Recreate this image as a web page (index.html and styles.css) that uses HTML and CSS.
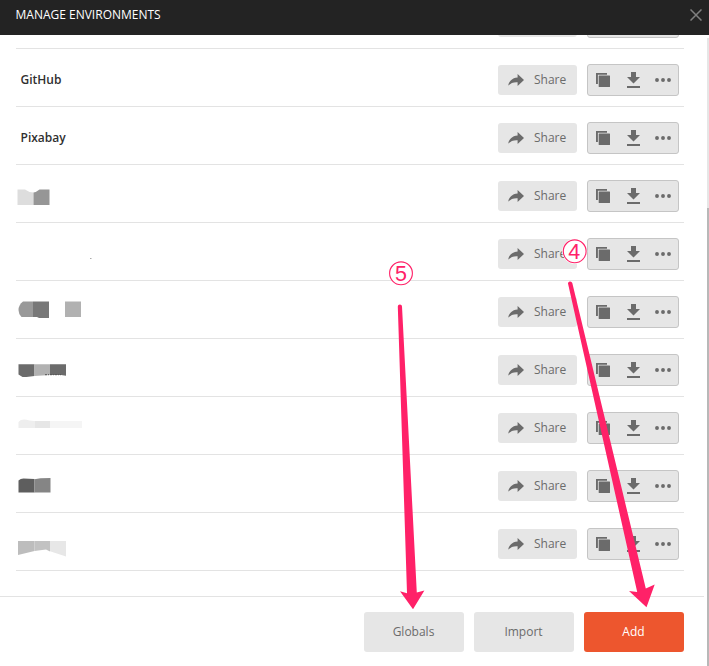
FILE: index.html
```html
<!DOCTYPE html>
<html lang="en">
<head>
<meta charset="utf-8">
<title>Manage Environments</title>
<link rel="stylesheet" href="styles.css">
</head>
<body>
<svg class="defs" aria-hidden="true">
  <symbol id="share" viewBox="0 0 16 12"><path d="M9.600 0 16 6l-6.400 6V8.200C5.600 7.900 3 9 .2 11.600 .8 7.600 4 3.700 9.600 3.400Z"/></symbol>
  <symbol id="copy" viewBox="0 0 14 14"><path d="M0 0h11v1.700H1.900V11H0Z"/><rect x="2.700" y="2.400" width="11.300" height="11.600" rx=".5"/></symbol>
  <symbol id="down" viewBox="0 0 13 16"><path d="M4 0h5v5h4L6.500 11.500 0 5h4ZM0 14h13v2H0Z"/></symbol>
  <symbol id="more" viewBox="0 0 16 4"><circle cx="2" cy="2" r="1.950"/><circle cx="8" cy="2" r="1.950"/><circle cx="14" cy="2" r="1.950"/></symbol>
</svg>
<div class="modal">
  <header class="header"><span>MANAGE ENVIRONMENTS</span>
    <svg class="close" viewBox="0 0 12 12"><path d="M.5.5l11 11M11.500.5l-11 11"/></svg>
  </header>
  <main class="body">
    <div class="list">
      <div class="row"><span class="name"></span><button class="share"></button><div class="tools"></div></div>
      <div class="row"><span class="name">GitHub</span><button class="share"><svg><use href="#share"/></svg>Share</button><div class="tools"><svg class="copy"><use href="#copy"/></svg><svg class="down"><use href="#down"/></svg><svg class="more"><use href="#more"/></svg></div></div>
      <div class="row"><span class="name">Pixabay</span><button class="share"><svg><use href="#share"/></svg>Share</button><div class="tools"><svg class="copy"><use href="#copy"/></svg><svg class="down"><use href="#down"/></svg><svg class="more"><use href="#more"/></svg></div></div>
      <div class="row"><svg class="mask" viewBox="16 165 100 57"><path fill="#ddd" d="M17.500 189.500H25q4 3 8.500 3V205h-16Z"/><path fill="#969696" d="M33.500 192.500q3-.5 6-3h10V205h-16Z"/></svg><button class="share"><svg><use href="#share"/></svg>Share</button><div class="tools"><svg class="copy"><use href="#copy"/></svg><svg class="down"><use href="#down"/></svg><svg class="more"><use href="#more"/></svg></div></div>
      <div class="row"><svg class="mask" viewBox="16 223 100 57"><path fill="#aaa" d="M90 258h1.500v1H90Z"/></svg><button class="share"><svg><use href="#share"/></svg>Share</button><div class="tools"><svg class="copy"><use href="#copy"/></svg><svg class="down"><use href="#down"/></svg><svg class="more"><use href="#more"/></svg></div></div>
      <div class="row"><svg class="mask" viewBox="16 281 100 57"><path fill="#999" d="M23 301.500h10V317H21.500q-3-3-3-7 0-5 4.500-8.500Z"/><path fill="#787878" d="M33 301.500h16V318H39l-2-1h-4Z"/><path fill="#b1b1b1" d="M65 301.500h16V317H65Z"/></svg><button class="share"><svg><use href="#share"/></svg>Share</button><div class="tools"><svg class="copy"><use href="#copy"/></svg><svg class="down"><use href="#down"/></svg><svg class="more"><use href="#more"/></svg></div></div>
      <div class="row"><svg class="mask" viewBox="16 339 100 57"><path fill="#6b6b6b" d="M18.500 364.300h16v11.700l-8 1-4 0-4-2.500Z"/><path fill="#b1b1b1" d="M34.500 364.300H50v10.700l-15.500 1Z"/><path fill="#6b6b6b" d="M50 364.300h16v11.500l-5-.8H50Z"/><path stroke="#555" stroke-dasharray="2 1 1 1" d="M45 374.700h16"/></svg><button class="share"><svg><use href="#share"/></svg>Share</button><div class="tools"><svg class="copy"><use href="#copy"/></svg><svg class="down"><use href="#down"/></svg><svg class="more"><use href="#more"/></svg></div></div>
      <div class="row"><svg class="mask" viewBox="16 397 100 57"><path fill="#eee" d="M18.500 422q3-4 11-1.500l5 .5v7h-16Z"/><path fill="#e6e6e6" d="M34.500 421H50v7H34.500Z"/><path fill="#f5f5f5" d="M50 421h32v7H50Z"/></svg><button class="share"><svg><use href="#share"/></svg>Share</button><div class="tools"><svg class="copy"><use href="#copy"/></svg><svg class="down"><use href="#down"/></svg><svg class="more"><use href="#more"/></svg></div></div>
      <div class="row"><svg class="mask" viewBox="16 455 100 57"><path fill="#5e5e5e" d="M18.500 480.500q2-2 5-2l11 .5v13.500h-16Z"/><path fill="#858585" d="M34.500 479.300l6-1.100 10-.2v14.500h-16Z"/></svg><button class="share"><svg><use href="#share"/></svg>Share</button><div class="tools"><svg class="copy"><use href="#copy"/></svg><svg class="down"><use href="#down"/></svg><svg class="more"><use href="#more"/></svg></div></div>
      <div class="row"><svg class="mask" viewBox="16 513 100 57"><path fill="#bdbdbd" d="M18 541h16.500v10L18 555Z"/><path fill="#c2c2c2" d="M34.500 541H50v10.500l-4-2-11.500 1.500Z"/><path fill="#e7e7e7" d="M50 541h16v15.500L50 551.200Z"/></svg><button class="share"><svg><use href="#share"/></svg>Share</button><div class="tools"><svg class="copy"><use href="#copy"/></svg><svg class="down"><use href="#down"/></svg><svg class="more"><use href="#more"/></svg></div></div>
    </div>
    <footer class="footer"><button class="btn">Globals</button><button class="btn">Import</button><button class="btn primary">Add</button></footer>
  </main>
  <div class="scrollbar"><div class="thumb"></div></div>
  <svg class="annotations" viewBox="0 0 709 666">
    <path d="M397.800 306.500q0-2 2.100-2t2.100 2L416.800 592.500l7.600-2L413 609.300 400 591.200l7 2Z"/>
    <path d="M568 283.500q-.2-1.500 1.700-2 2-.3 2.600 1.500L645.800 588.500l8.900-4L646.500 607.300 629 591l8.200 1Z"/>
    <circle class="halo" cx="574.700" cy="251.300" r="12.500"/>
    <circle class="ring" cx="574.700" cy="251.300" r="11.400"/>
    <circle class="ring" cx="401" cy="273.300" r="11.400"/>
    <text x="574.300" y="259.200">4</text>
    <text x="401" y="281">5</text>
  </svg>
</div>
</body>
</html>
```

FILE: styles.css
```css
* { box-sizing: border-box; }
body { margin: 0; background: #fff; font: 12px/18px "Open Sans", "Noto Sans", sans-serif; color: #6b6b6b; }
svg { display: block; fill: currentColor; flex: none; }
.defs { position: absolute; width: 0; height: 0; }
.modal { position: relative; width: 709px; height: 666px; overflow: hidden; display: grid; grid-template: 35px 631px / 1fr 2px; }
.header { grid-column: 1 / 3; display: flex; justify-content: space-between; align-items: center; padding: 0 7px 5px 15.5px; background: #232323; color: #fff; }
.close { width: 12px; height: 12px; stroke: #808080; stroke-width: 1.5; fill: none; }
.body { display: flex; flex-direction: column; min-width: 0; overflow: hidden; }
.list { flex: none; height: 561px; overflow: hidden; padding: 0 23px 25px 16px; display: flex; flex-direction: column; justify-content: flex-end; }
.list { height: 561px; }
.row { flex: none; display: flex; align-items: center; height: 58px; padding: 5px 5px 0 0; border-bottom: 1px solid #e3e3e3; }
.name { flex: 1; padding-left: 4.5px; font-weight: 600; color: #303030; }
.mask { width: 100px; height: 57px; margin: -5px auto 0 0; }
button { border: 0; border-radius: 3px; background: #e6e6e6; color: #6b6b6b; font: inherit; padding: 0; }
.share { display: flex; align-items: center; gap: 10px; width: 79px; height: 30px; padding-left: 10px; margin-right: 10px; }
.share svg { width: 16px; height: 12px; }
.tools { display: flex; align-items: center; width: 92px; height: 32px; padding-left: 8px; border: 1px solid #c5c5c5; border-radius: 3px; background: #e6e6e6; }
.copy { width: 14px; height: 14px; }
.down { width: 13px; height: 16px; margin-left: 17px; }
.more { width: 16px; height: 4px; margin-left: 15px; }
.footer { flex: 1; display: flex; justify-content: flex-end; gap: 10px; width: 704px; padding: 15px 20px; border-top: 1px solid #e3e3e3; }
.btn { width: 100px; height: 40px; padding-right: 1px; }
.primary { background: #ed562e; color: #fff; }
.scrollbar { margin-top: 3px; padding-top: 170px; background: #e6e6e6; }
.thumb { height: 100%; background: #b8b8b8; }
.annotations { position: absolute; inset: 0; width: 709px; height: 666px; fill: #ff2168; pointer-events: none; }
.annotations .halo { fill: #fff; }
.annotations .ring { fill: #fff; stroke: #ff2168; stroke-width: 1.1; }
.annotations text { font: 21.500px "Liberation Sans", sans-serif; text-anchor: middle; }
```
